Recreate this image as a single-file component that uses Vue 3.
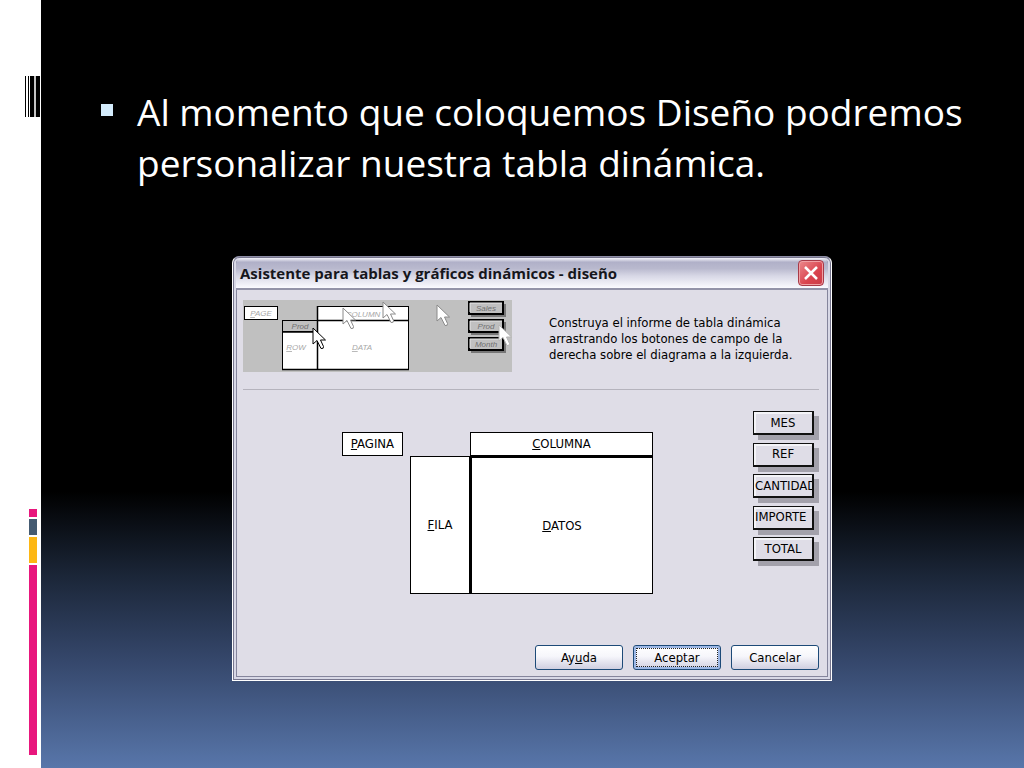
<script setup>
const fields = ['MES', 'REF', 'CANTIDAD', 'IMPORTE', 'TOTAL']
const arrows = [
  { x: 100, y: 8, ink: '#8a8a8a' },
  { x: 140, y: 2, ink: '#8a8a8a' },
  { x: 194, y: 5, ink: '#8a8a8a' },
  { x: 70, y: 28, ink: '#000000' },
  { x: 256, y: 25, ink: '#b4b4b4' }
]
const chips = [
  { y: 2, label: 'Sales' },
  { y: 20, label: 'Prod' },
  { y: 38, label: 'Month' }
]
</script>

<template>
  <main class="slide">
    <aside class="rail" aria-hidden="true">
      <svg class="barcode" width="16" height="41" viewBox="0 0 16 41">
        <path d="M0 0h1v41h-1zM3 0h1v41h-1zM5 0h4v41h-4zM11 0h4v41h-4z" fill="#000" />
        <path d="M9 0h2v41h-2z" fill="#c4c4c4" />
      </svg>
      <div class="stripes">
        <span class="stripe pink cap"></span>
        <span class="stripe slate"></span>
        <span class="stripe amber"></span>
        <span class="stripe pink tall"></span>
      </div>
    </aside>

    <section class="content">
      <ul class="points">
        <li>Al momento que coloquemos Diseño podremos personalizar nuestra tabla dinámica.</li>
      </ul>

      <div class="dialog" role="dialog" aria-labelledby="dialog-title">
        <header class="titlebar">
          <h2 id="dialog-title">Asistente para tablas y gráficos dinámicos - diseño</h2>
          <button class="close" type="button" aria-label="Cerrar">
            <svg width="16" height="16" viewBox="0 0 16 16">
              <path d="M2 2L14 14M14 2L2 14" stroke="#fff" stroke-width="2.500" />
            </svg>
          </button>
        </header>

        <div class="body">
          <div class="intro">
            <svg class="preview" width="269" height="72" viewBox="0 0 269 72" role="img" aria-label="Ejemplo">
              <rect width="269" height="72" fill="#c0c0c0" />
              <g fill="#fff" stroke="#000">
                <rect x="1.5" y="6.5" width="33" height="13" />
                <rect x="74.5" y="6.5" width="91" height="14" />
                <rect x="39.5" y="20.5" width="35" height="49" />
                <rect x="74.5" y="20.5" width="91" height="49" />
                <rect x="39.5" y="20.5" width="35" height="11" fill="#c0c0c0" />
              </g>
              <path d="M74.500 6v64M74 20.500h92M39 69.500h127M39 32h35" stroke="#000" stroke-width="1.500" fill="none" />
              <g class="tiny">
                <text x="18" y="16"><tspan class="key">P</tspan>AGE</text>
                <text x="120" y="17"><tspan class="key">C</tspan>OLUMN</text>
                <text x="53" y="50"><tspan class="key">R</tspan>OW</text>
                <text x="119" y="50"><tspan class="key">D</tspan>ATA</text>
                <text class="dark" x="57" y="29">Prod</text>
              </g>
              <g v-for="c in chips" :key="c.label" class="tiny">
                <rect x="228" :y="c.y + 2" width="35" height="13" fill="#777" />
                <rect x="226" :y="c.y" width="34" height="12" fill="#c0c0c0" stroke="#000" stroke-width="2" />
                <path :d="`M227 ${c.y + 10}V${c.y + 1}H259`" stroke="#e8e8e8" fill="none" />
                <text class="dark" x="243" :y="c.y + 9">{{ c.label }}</text>
              </g>
              <path
                v-for="a in arrows"
                :key="a.x"
                :transform="`translate(${a.x} ${a.y})`"
                d="M0 0V16L4 12.500L8 20.500Q11 21 10.500 18.500L7.500 12H12.500Z"
                fill="#fff"
                :stroke="a.ink"
              />
            </svg>
            <p>Construya el informe de tabla dinámica arrastrando los botones de campo de la derecha sobre el diagrama a la izquierda.</p>
          </div>

          <div class="workspace">
            <div class="pivot">
              <div class="zone page"><span><u>P</u>AGINA</span></div>
              <div class="zone column"><span><u>C</u>OLUMNA</span></div>
              <div class="zone row"><span><u>F</u>ILA</span></div>
              <div class="zone data"><span><u>D</u>ATOS</span></div>
            </div>
            <div class="fields">
              <button v-for="f in fields" :key="f" class="field" :class="{ long: f.length > 6 }" type="button">{{ f }}</button>
            </div>
          </div>

          <footer class="actions">
            <button type="button"><span>Ay<u>u</u>da</span></button>
            <button type="button" class="default"><span>Aceptar</span></button>
            <button type="button"><span>Cancelar</span></button>
          </footer>
        </div>
      </div>
    </section>
  </main>
</template>

<style>
body {
  margin: 0;
  background: #000;
}
</style>

<style scoped>
* {
  box-sizing: border-box;
}
.slide {
  display: flex;
  min-height: 100vh;
  background: linear-gradient(#000 0%, #000 64%, #1b2638 75%, #35476b 86%, #5876aa 100%);
}
.rail {
  flex: none;
  width: 41px;
  padding: 76px 0 13px 25px;
  display: flex;
  flex-direction: column;
  justify-content: space-between;
  background: #fff;
}
.barcode {
  display: block;
}
.stripes {
  display: flex;
  flex-direction: column;
  gap: 2px;
  margin-left: 4px;
  width: 8px;
}
.stripe { display: block; }
.pink { background: #e8177d; }
.slate { background: #455b72; height: 16px; }
.amber { background: #fdb714; height: 26px; }
.cap { height: 8px; }
.tall { height: 190px; }
.content {
  flex: 1;
  min-width: 0;
  padding: 86px 40px 40px 60px;
}
.points {
  margin: 0;
  padding: 0 0 0 36px;
  list-style: none;
  color: #fff;
  font: 37px/51px "Open Sans", "Noto Sans", sans-serif;
}
.points li {
  position: relative;
}
.points li::before {
  content: "";
  position: absolute;
  left: -36px;
  top: 18px;
  width: 12px;
  height: 12px;
  background: #d4ecfc;
}
.dialog {
  width: 100%;
  max-width: 600px;
  margin: 68px 0 0 131px;
  border: 1px solid #fff;
  border-top-color: #8e8ea6;
  background: #dfdde7;
  box-shadow: inset 0 0 0 1px #77768e, inset 0 0 0 3px #d8d8e6, inset 0 0 0 4px #85859c;
  padding: 1px 3px 3px;
  border-radius: 7px 7px 0 0;
  color: #000;
  font: 13px/16px "DejaVu Sans Condensed", "DejaVu Sans", sans-serif;
}
.titlebar {
  display: flex;
  align-items: center;
  justify-content: space-between;
  height: 32px;
  padding: 0 4px;
  border-bottom: 2px solid #9292a8;
  border-radius: 6px 6px 0 0;
  background: linear-gradient(#f4f4fa 0, #b0b0c8 14%, #b9b9ce 35%, #d8d8e6 60%, #fafaff 100%);
}
.titlebar h2 {
  margin: 0;
  color: #16161c;
  font: bold 15px/20px "Open Sans", sans-serif;
}
.close {
  width: 26px;
  height: 26px;
  padding: 0;
  display: grid;
  place-items: center;
  border: 1px solid #a83a48;
  border-radius: 4px;
  background: linear-gradient(135deg, #ec8a8c, #d9434e 60%, #c93c48);
  box-shadow: inset 0 0 0 1px #f0a0a4;
}
.body {
  padding: 10px 9px 7px 7px;
}
.intro {
  display: flex;
  gap: 37px;
  padding-bottom: 17px;
  border-bottom: 1px solid #b5b3bd;
}
.preview {
  flex: none;
  display: block;
}
.intro p {
  margin: 15px 0 0;
  max-width: 250px;
}
.tiny {
  font: italic 8px "Liberation Sans", sans-serif;
}
.tiny text {
  fill: #a8a8a8;
  text-anchor: middle;
}
.tiny .dark {
  fill: #707070;
}
.tiny .key {
  text-decoration: underline;
}
.workspace {
  display: flex;
  justify-content: space-between;
  align-items: flex-start;
  padding: 21px 5px 0 99px;
}
.pivot {
  display: grid;
  grid-template-columns: 61px 7px 60px 183px;
  grid-template-rows: 24px 138px;
  padding-top: 21px;
}
.zone {
  display: grid;
  place-items: center;
  border: 1px solid #000;
  background: #fff;
}
.column { grid-column: 4; }
.row { grid-column: 3; grid-row: 2; }
.data { grid-column: 4; grid-row: 2; border-width: 2px 1px 1px 2px; }
.fields {
  display: flex;
  flex-direction: column;
  justify-content: space-between;
  height: 150px;
}
.field {
  width: 61px;
  height: 24px;
  padding: 0;
  overflow: hidden;
  white-space: nowrap;
  border: 1px solid #111;
  border-right-width: 2px;
  border-bottom-width: 2px;
  background: #dfdde7;
  box-shadow: inset 1px 1px 0 1px #f4f4f8, 5px 5px 0 #a3a1ab;
  color: #000;
  font: inherit;
}
.field.long {
  text-align: left;
  padding-left: 1px;
}
.actions {
  display: flex;
  justify-content: flex-end;
  gap: 10px;
  margin-top: 51px;
}
.actions button {
  width: 88px;
  height: 25px;
  padding: 2px;
  border: 1px solid #1d4a78;
  border-radius: 3px;
  background: linear-gradient(#fff 0, #f6f6fb 45%, #d0cfe0 100%);
  color: #000;
  font: inherit;
}
.actions button span {
  display: block;
  line-height: 19px;
}
.actions .default {
  box-shadow: inset 0 0 0 2px #9db8e6;
}
.actions .default span {
  border: 1px dotted #222;
  line-height: 17px;
}
</style>
